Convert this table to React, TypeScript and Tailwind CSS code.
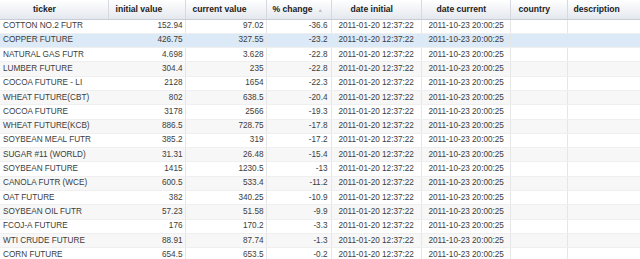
const rows: [string, string, string, string][] = [
  ['COTTON NO.2 FUTR', '152.94', '97.02', '-36.6'],
  ['COPPER FUTURE', '426.75', '327.55', '-23.2'],
  ['NATURAL GAS FUTR', '4.698', '3.628', '-22.8'],
  ['LUMBER FUTURE', '304.4', '235', '-22.8'],
  ['COCOA FUTURE - LI', '2128', '1654', '-22.3'],
  ['WHEAT FUTURE(CBT)', '802', '638.5', '-20.4'],
  ['COCOA FUTURE', '3178', '2566', '-19.3'],
  ['WHEAT FUTURE(KCB)', '886.5', '728.75', '-17.8'],
  ['SOYBEAN MEAL FUTR', '385.2', '319', '-17.2'],
  ['SUGAR #11 (WORLD)', '31.31', '26.48', '-15.4'],
  ['SOYBEAN FUTURE', '1415', '1230.5', '-13'],
  ['CANOLA FUTR (WCE)', '600.5', '533.4', '-11.2'],
  ['OAT FUTURE', '382', '340.25', '-10.9'],
  ['SOYBEAN OIL FUTR', '57.23', '51.58', '-9.9'],
  ['FCOJ-A FUTURE', '176', '170.2', '-3.3'],
  ['WTI CRUDE FUTURE', '88.91', '87.74', '-1.3'],
  ['CORN FUTURE', '654.5', '653.5', '-0.2'],
];

const cols = [
  { label: 'ticker', w: 'w-[108px]', head: 'pl-[33px]' },
  { label: 'initial value', w: 'w-[77px]', head: 'pl-[7px]' },
  { label: 'current value', w: 'w-[81px]', head: 'pl-[7px]' },
  { label: '% change', w: 'w-[65px]', head: 'pl-[6px]' },
  { label: 'date initial', w: 'w-[90px]', head: 'pl-[19px]' },
  { label: 'date current', w: 'w-[89px]', head: 'pl-[15px]' },
  { label: 'country', w: 'w-[57px]', head: 'pl-[8px]' },
  { label: 'description', w: 'w-[73px]', head: 'pl-[6px]' },
];

export default function App() {
  return (
    <div className="h-[259px] w-[640px] overflow-hidden bg-white font-['Liberation_Sans',Arial,sans-serif] text-[8.2px] text-[#3c3c3c]">
      <table className="w-[640px] table-fixed border-collapse">
        <colgroup>
          {cols.map((c) => (
            <col key={c.label} className={c.w} />
          ))}
        </colgroup>
        <thead>
          <tr className="h-[19px] bg-gradient-to-b from-white to-[#e4e8ee]">
            {cols.map((c, i) => (
              <th
                key={c.label}
                className={`border-b border-[#c9ced6] text-left font-bold text-[8.6px] text-[#222] ${c.head} ${
                  i < cols.length - 1 ? 'border-r border-r-[#d6dae0]' : ''
                }`}
              >
                {c.label}
                {c.label === '% change' && <span className="ml-[5px] text-[5px] text-[#bbb]">▲</span>}
              </th>
            ))}
          </tr>
        </thead>
        <tbody>
          {rows.map(([ticker, init, cur, change], i) => {
            const bg = i === 1 ? 'bg-[#dce9f6]' : i % 2 === 1 ? 'bg-[#f7f7f7]' : 'bg-white';
            const cell = 'border-r border-[#e6e6e6] border-b border-b-[#efefef] leading-none';
            return (
              <tr key={ticker} className={`h-[14.3px] ${bg}`}>
                <td className={`${cell} border-r-0 whitespace-nowrap pl-[3px] text-left`}>{ticker}</td>
                <td className={`${cell} pr-[2px] text-right`}>{init}</td>
                <td className={`${cell} pr-[2px] text-right`}>{cur}</td>
                <td className={`${cell} pr-[3px] text-right`}>{change}</td>
                <td className={`${cell} whitespace-nowrap pl-[7px]`}>2011-01-20 12:37:22</td>
                <td className={`${cell} whitespace-nowrap pl-[7px]`}>2011-10-23 20:00:25</td>
                <td className={cell}></td>
                <td className={`${cell} border-r-0`}></td>
              </tr>
            );
          })}
        </tbody>
      </table>
    </div>
  );
}
